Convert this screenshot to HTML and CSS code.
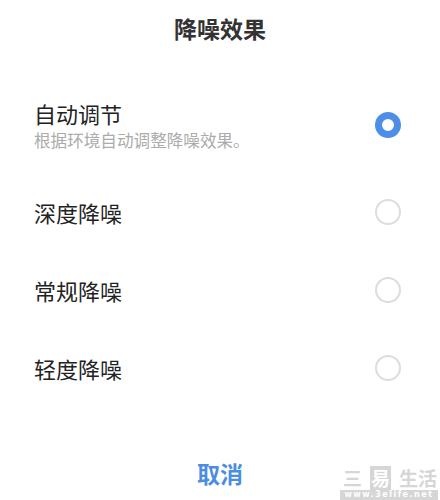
FILE: index.html
```html
<!DOCTYPE html>
<html>
<head>
	<meta charset="utf-8">
	<title>降噪效果</title>
	<link rel="stylesheet" href="styles.css">
</head>
<body>
	<div class="sheet">
		<div class="title">降噪效果</div>
		<div class="options">
			<div class="option first">
				<div class="text">
					<div class="label">自动调节</div>
					<div class="desc">根据环境自动调整降噪效果。</div>
				</div>
				<span class="radio checked"></span>
			</div>
			<div class="option">
				<div class="label">深度降噪</div>
				<span class="radio"></span>
			</div>
			<div class="option">
				<div class="label">常规降噪</div>
				<span class="radio"></span>
			</div>
			<div class="option">
				<div class="label">轻度降噪</div>
				<span class="radio"></span>
			</div>
		</div>
		<div class="footer">
			<span class="cancel">取消</span>
		</div>
		<div class="mark">
			<div class="mark-top"><span>三</span><span class="box">易</span><span>生活</span></div>
			<div class="mark-url">www.3elife.net</div>
		</div>
	</div>
</body>
</html>
```

FILE: styles.css
```css
html, body
{
	margin: 0;
	padding: 0;
	background: #FFFFFF;
	font-family: "Noto Sans CJK SC", "Noto Sans", sans-serif;
}
.sheet
{
	position: relative;
	width: 440px;
	height: 500px;
	overflow: hidden;
}
.title
{
	height: 56px;
	line-height: 56px;
	text-align: center;
	font-size: 23px;
	font-weight: 700;
	color: #333333;
	margin-bottom: 21px;
}
.option
{
	display: flex;
	align-items: center;
	justify-content: space-between;
	height: 78px;
	padding: 0 39px 0 34px;
}
.option.first
{
	height: 96px;
}
.label
{
	font-size: 22px;
	line-height: 26px;
	color: #222222;
}
.desc
{
	margin-top: 4px;
	font-size: 16.6px;
	line-height: 20px;
	color: #ABABAB;
}
.radio
{
	box-sizing: border-box;
	width: 26px;
	height: 26px;
	border-radius: 50%;
	border: 2px solid #DDDDDD;
	background: #FFFFFF;
}
.radio.checked
{
	border: 7px solid #4D8FE8;
}
.footer
{
	display: flex;
	justify-content: center;
	padding-top: 50px;
}
.cancel
{
	font-size: 23px;
	line-height: 32px;
	font-weight: 700;
	color: #4A8DE2;
}
.mark
{
	position: absolute;
	right: 2px;
	bottom: 0;
	width: 98px;
	color: #D6D6D6;
}
.mark-top
{
	display: flex;
	justify-content: space-between;
	font-size: 19px;
	line-height: 24px;
	font-weight: 700;
	padding: 0 1px 0 3px;
}
.mark-top .box
{
	background: #D6D6D6;
	color: #FFFFFF;
	padding: 0 1px;
}
.mark-url
{
	background: #D6D6D6;
	color: #FFFFFF;
	font-family: "DejaVu Sans", sans-serif;
	font-weight: 700;
	font-size: 8px;
	line-height: 10px;
	letter-spacing: 1.5px;
	text-align: center;
}
```
